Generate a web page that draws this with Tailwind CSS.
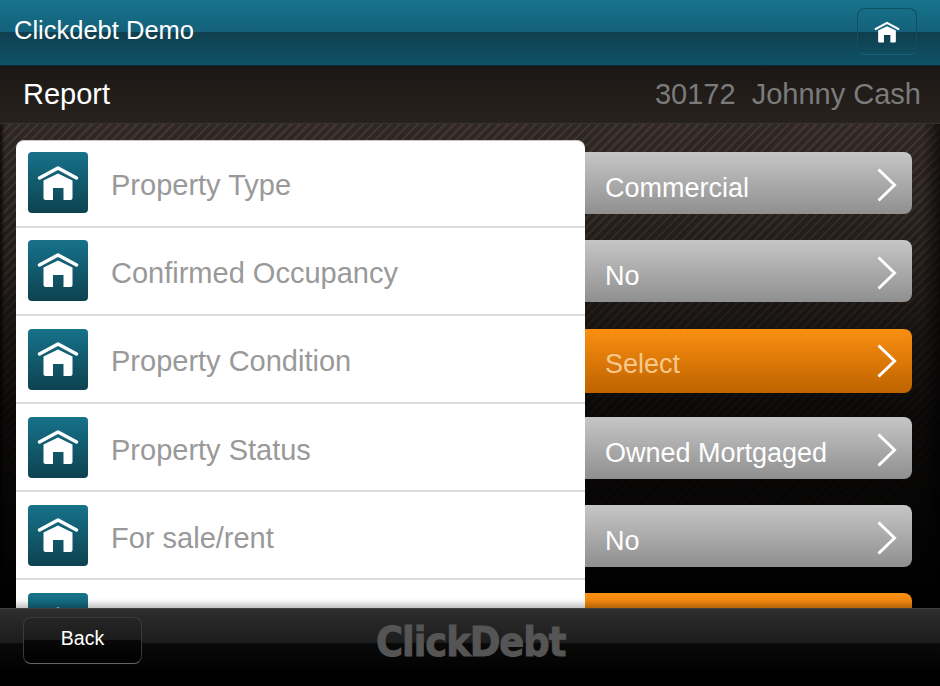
<!DOCTYPE html>
<html>
<head>
<meta charset="utf-8">
<title>Clickdebt Demo</title>
<script src="https://cdn.jsdelivr.net/npm/@tailwindcss/browser@4"></script>
</head>
<body class="bg-black">
<div class="w-[940px] h-[686px] flex flex-col overflow-hidden font-['Liberation_Sans',sans-serif]">

    <!-- Title bar -->
    <header class="h-[66px] shrink-0 flex items-center justify-between pl-[14px] pr-[23px] border-b border-[#0a2a35] bg-[linear-gradient(to_bottom,#17748c_0%,#14607a_50%,#103f4f_50%,#0e5366_100%)]">
        <h1 class="text-[25.5px] text-white -mt-[5px]">Clickdebt Demo</h1>
        <button class="w-[60px] h-[47px] -mt-[2px] flex items-center justify-center rounded-lg border border-[#0f5063] border-b-[#15627a]">
            <svg class="w-[26px] h-[22px]" viewBox="0 0 42 36" fill="none"><path d="M2.5 13 L21 3 L39.5 13" stroke="#fff" stroke-width="3.5" stroke-linecap="round" stroke-linejoin="round"/><path fill="#fff" d="M21 8.5 L35.5 15.5 V33 Q35.5 35 33.5 35 H26.5 V23 H16 V35 H8.5 Q6.5 35 6.5 33 V15.5 Z"/></svg>
        </button>
    </header>

    <!-- Sub header -->
    <div class="h-[58px] shrink-0 flex items-center justify-between pl-[23px] pr-[19px] border-b border-[#3a322c] bg-[linear-gradient(to_bottom,#1b1714,#28221e)]">
        <h2 class="text-[29px] text-white">Report</h2>
        <p class="text-[29px] text-[#7b7b7b] whitespace-pre">30172  Johnny Cash</p>
    </div>

    <!-- Content -->
    <main class="flex-1 min-h-0 flex overflow-hidden pl-4 pt-4 bg-[linear-gradient(to_right,rgba(0,0,0,0.7)_0px,rgba(0,0,0,0)_5px,rgba(0,0,0,0)_922px,rgba(0,0,0,0.6)_940px),linear-gradient(to_bottom,rgba(0,0,0,0)_0%,rgba(0,0,0,0.3)_28%,rgba(0,0,0,0.6)_47%,rgba(0,0,0,0.78)_60%,#000_100%),repeating-linear-gradient(135deg,#40362f_0px,#40362f_2.5px,#2f2723_2.5px,#2f2723_6.4px)]">

        <!-- List panel -->
        <div class="relative z-10 w-[569px] shrink-0 self-start bg-white rounded-t-lg border-t border-[#c9c5c2]">
            <div class="h-[87px] flex items-center gap-[23px] pl-3 border-b-2 border-[#dcdcdc]">
                <div class="w-[60px] h-[61px] mb-[2px] flex items-center justify-center rounded-[4px] bg-[linear-gradient(to_bottom,#17728a,#0d4250)]">
                    <svg class="w-[42px] h-[36px]" viewBox="0 0 42 36" fill="none"><path d="M2.5 13 L21 3 L39.5 13" stroke="#fff" stroke-width="3.5" stroke-linecap="round" stroke-linejoin="round"/><path fill="#fff" d="M21 8.5 L35.5 15.5 V33 Q35.5 35 33.5 35 H26.5 V23 H16 V35 H8.5 Q6.5 35 6.5 33 V15.5 Z"/></svg>
                </div>
                <span class="text-[29px] text-[#999] pt-[5px]">Property Type</span>
            </div>
            <div class="h-[88px] flex items-center gap-[23px] pl-3 border-b-2 border-[#dcdcdc]">
                <div class="w-[60px] h-[61px] mb-[2px] flex items-center justify-center rounded-[4px] bg-[linear-gradient(to_bottom,#17728a,#0d4250)]">
                    <svg class="w-[42px] h-[36px]" viewBox="0 0 42 36" fill="none"><path d="M2.5 13 L21 3 L39.5 13" stroke="#fff" stroke-width="3.5" stroke-linecap="round" stroke-linejoin="round"/><path fill="#fff" d="M21 8.5 L35.5 15.5 V33 Q35.5 35 33.5 35 H26.5 V23 H16 V35 H8.5 Q6.5 35 6.5 33 V15.5 Z"/></svg>
                </div>
                <span class="text-[29px] text-[#999] pt-[5px]">Confirmed Occupancy</span>
            </div>
            <div class="h-[88px] flex items-center gap-[23px] pl-3 border-b-2 border-[#dcdcdc]">
                <div class="w-[60px] h-[61px] flex items-center justify-center rounded-[4px] bg-[linear-gradient(to_bottom,#17728a,#0d4250)]">
                    <svg class="w-[42px] h-[36px]" viewBox="0 0 42 36" fill="none"><path d="M2.5 13 L21 3 L39.5 13" stroke="#fff" stroke-width="3.5" stroke-linecap="round" stroke-linejoin="round"/><path fill="#fff" d="M21 8.5 L35.5 15.5 V33 Q35.5 35 33.5 35 H26.5 V23 H16 V35 H8.5 Q6.5 35 6.5 33 V15.5 Z"/></svg>
                </div>
                <span class="text-[29px] text-[#999] pt-[5px]">Property Condition</span>
            </div>
            <div class="h-[88px] flex items-center gap-[23px] pl-3 border-b-2 border-[#dcdcdc]">
                <div class="w-[60px] h-[61px] flex items-center justify-center rounded-[4px] bg-[linear-gradient(to_bottom,#17728a,#0d4250)]">
                    <svg class="w-[42px] h-[36px]" viewBox="0 0 42 36" fill="none"><path d="M2.5 13 L21 3 L39.5 13" stroke="#fff" stroke-width="3.5" stroke-linecap="round" stroke-linejoin="round"/><path fill="#fff" d="M21 8.5 L35.5 15.5 V33 Q35.5 35 33.5 35 H26.5 V23 H16 V35 H8.5 Q6.5 35 6.5 33 V15.5 Z"/></svg>
                </div>
                <span class="text-[29px] text-[#999] pt-[7px]">Property Status</span>
            </div>
            <div class="h-[88px] flex items-center gap-[23px] pl-3 border-b-2 border-[#dcdcdc]">
                <div class="w-[60px] h-[61px] flex items-center justify-center rounded-[4px] bg-[linear-gradient(to_bottom,#17728a,#0d4250)]">
                    <svg class="w-[42px] h-[36px]" viewBox="0 0 42 36" fill="none"><path d="M2.5 13 L21 3 L39.5 13" stroke="#fff" stroke-width="3.5" stroke-linecap="round" stroke-linejoin="round"/><path fill="#fff" d="M21 8.5 L35.5 15.5 V33 Q35.5 35 33.5 35 H26.5 V23 H16 V35 H8.5 Q6.5 35 6.5 33 V15.5 Z"/></svg>
                </div>
                <span class="text-[29px] text-[#999] pt-[7px]">For sale/rent</span>
            </div>
            <div class="h-[88px] flex items-start gap-[23px] pl-3 pt-[13px]">
                <div class="w-[60px] h-[61px] flex items-center justify-center rounded-[4px] bg-[linear-gradient(to_bottom,#17728a,#0d4250)]">
                    <svg class="w-[42px] h-[36px]" viewBox="0 0 42 36" fill="none"><path d="M2.5 13 L21 3 L39.5 13" stroke="#fff" stroke-width="3.5" stroke-linecap="round" stroke-linejoin="round"/><path fill="#fff" d="M21 8.5 L35.5 15.5 V33 Q35.5 35 33.5 35 H26.5 V23 H16 V35 H8.5 Q6.5 35 6.5 33 V15.5 Z"/></svg>
                </div>
            </div>
        </div>

        <!-- Value buttons -->
        <div class="w-[327px] shrink-0 flex flex-col pt-3">
            <div class="h-[62px] shrink-0 mb-[26px] flex items-center justify-between pl-[20px] pr-[15px] rounded-r-lg bg-[linear-gradient(to_bottom,#c6c6c6,#8f8f8f)]">
                <span class="text-[27px] text-white pt-[11px]">Commercial</span>
                <svg class="w-[20px] h-[34px] mt-[3px]" viewBox="0 0 20 34" fill="none"><path d="M1.5 1.5 L17.5 17 L1.5 32.5" stroke="#fff" stroke-width="3"/></svg>
            </div>
            <div class="h-[62px] shrink-0 mb-[27px] flex items-center justify-between pl-[20px] pr-[15px] rounded-r-lg bg-[linear-gradient(to_bottom,#c6c6c6,#8f8f8f)]">
                <span class="text-[27px] text-white pt-[11px]">No</span>
                <svg class="w-[20px] h-[34px] mt-[3px]" viewBox="0 0 20 34" fill="none"><path d="M1.5 1.5 L17.5 17 L1.5 32.5" stroke="#fff" stroke-width="3"/></svg>
            </div>
            <div class="h-[64px] shrink-0 mb-[24px] flex items-center justify-between pl-[20px] pr-[15px] rounded-r-lg bg-[linear-gradient(to_bottom,#fb8f10,#bd6300)]">
                <span class="text-[27px] text-[#f8c88c] pt-[7px]">Select</span>
                <svg class="w-[20px] h-[34px]" viewBox="0 0 20 34" fill="none"><path d="M1.5 1.5 L17.5 17 L1.5 32.5" stroke="#fff" stroke-width="3"/></svg>
            </div>
            <div class="h-[62px] shrink-0 mb-[26px] flex items-center justify-between pl-[20px] pr-[15px] rounded-r-lg bg-[linear-gradient(to_bottom,#c6c6c6,#8f8f8f)]">
                <span class="text-[27px] text-white pt-[11px]">Owned Mortgaged</span>
                <svg class="w-[20px] h-[34px] mt-[3px]" viewBox="0 0 20 34" fill="none"><path d="M1.5 1.5 L17.5 17 L1.5 32.5" stroke="#fff" stroke-width="3"/></svg>
            </div>
            <div class="h-[62px] shrink-0 mb-[26px] flex items-center justify-between pl-[20px] pr-[15px] rounded-r-lg bg-[linear-gradient(to_bottom,#c6c6c6,#8f8f8f)]">
                <span class="text-[27px] text-white pt-[11px]">No</span>
                <svg class="w-[20px] h-[34px] mt-[3px]" viewBox="0 0 20 34" fill="none"><path d="M1.5 1.5 L17.5 17 L1.5 32.5" stroke="#fff" stroke-width="3"/></svg>
            </div>
            <div class="h-[64px] shrink-0 rounded-r-lg bg-[linear-gradient(to_bottom,#fb8f10,#bd6300)]"></div>
        </div>
    </main>

    <!-- Footer -->
    <footer class="relative z-20 h-[78px] shrink-0 flex items-start px-[23px] pt-[8px] border-t border-[#3f3f3f] shadow-[0_-4px_6px_rgba(0,0,0,0.25)] bg-[linear-gradient(to_bottom,#2e2e2e_0%,#1c1c1c_44%,#0a0a0a_44%,#000_85%)]">
        <button class="w-[119px] h-[47px] pb-[4px] rounded-lg border border-[#3a3a3a] border-b-[#666] text-[19.5px] text-white bg-[linear-gradient(to_bottom,#262626_0%,#1a1a1a_50%,#080808_50%,#000_100%)]">Back</button>
        <span class="ml-[234px] -mt-[3px] text-[41px] leading-[56px] font-bold text-[#555] [-webkit-text-stroke:1px_#555] font-['DejaVu_Sans_Condensed','DejaVu_Sans',sans-serif] tracking-[-1px]">ClickDebt</span>
    </footer>
</div>
</body>
</html>
